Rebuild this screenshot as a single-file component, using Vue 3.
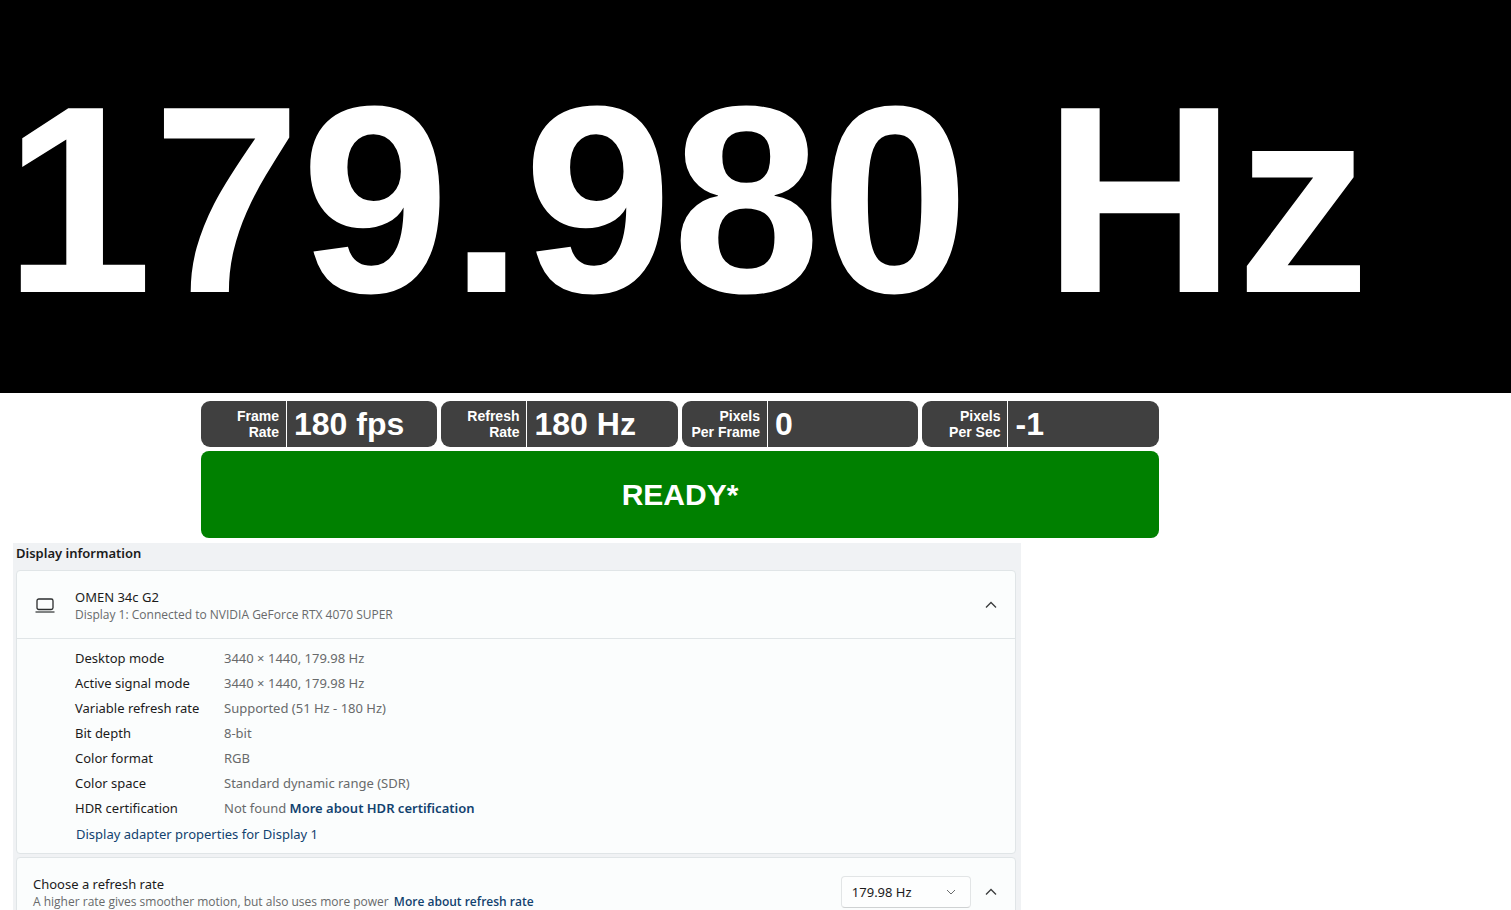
<script setup>
import { ref } from 'vue'

const stats = [
  { label: ['Frame', 'Rate'], value: '180 fps' },
  { label: ['Refresh', 'Rate'], value: '180 Hz' },
  { label: ['Pixels', 'Per Frame'], value: '0' },
  { label: ['Pixels', 'Per Sec'], value: '-1' },
]

const details = [
  { name: 'Desktop mode', value: '3440 × 1440, 179.98 Hz' },
  { name: 'Active signal mode', value: '3440 × 1440, 179.98 Hz' },
  { name: 'Variable refresh rate', value: 'Supported (51 Hz - 180 Hz)' },
  { name: 'Bit depth', value: '8-bit' },
  { name: 'Color format', value: 'RGB' },
  { name: 'Color space', value: 'Standard dynamic range (SDR)' },
  { name: 'HDR certification', value: 'Not found', link: 'More about HDR certification' },
]

const rate = ref('179.98 Hz')
</script>

<template>
  <main class="page">
    <h1 class="readout">179.980 Hz</h1>

    <section class="monitor">
      <div class="stats">
        <div v-for="s in stats" :key="s.label.join(' ')" class="stat">
          <div class="stat-label">{{ s.label[0] }}<br />{{ s.label[1] }}</div>
          <div class="stat-value">{{ s.value }}</div>
        </div>
      </div>
      <div class="ready">READY*</div>
    </section>

    <section class="settings">
      <h2 class="heading">Display information</h2>

      <div class="card">
        <div class="card-head">
          <svg class="laptop" viewBox="0 0 20 16" aria-hidden="true">
            <rect x="2" y="2" width="16" height="10.5" rx="1.8" fill="none" stroke="#2b2d2e" stroke-width="1.3" />
            <path d="M0.5 15H19.5" stroke="#4a4c4d" stroke-width="1.4" />
          </svg>
          <div class="titles">
            <div class="title">OMEN 34c G2</div>
            <div class="subtitle">Display 1: Connected to NVIDIA GeForce RTX 4070 SUPER</div>
          </div>
          <button class="toggle" type="button" aria-label="Collapse display details">
            <svg viewBox="0 0 12 8" aria-hidden="true"><path d="M1 6.5L6 1.5L11 6.5" /></svg>
          </button>
        </div>
        <div class="card-body">
          <table class="details">
            <tbody>
              <tr v-for="d in details" :key="d.name">
                <th scope="row">{{ d.name }}</th>
                <td>{{ d.value }} <a v-if="d.link" class="strong-link" href="#">{{ d.link }}</a></td>
              </tr>
            </tbody>
          </table>
          <a class="adapter-link" href="#">Display adapter properties for Display 1</a>
        </div>
      </div>

      <div class="card rate-card">
        <div class="titles">
          <label class="title" for="rate">Choose a refresh rate</label>
          <div class="subtitle">
            A higher rate gives smoother motion, but also uses more power
            <a class="strong-link more" href="#">More about refresh rate</a>
          </div>
        </div>
        <div class="select">
          <select id="rate" v-model="rate">
            <option>179.98 Hz</option>
          </select>
          <svg class="arrow" viewBox="0 0 10 6" aria-hidden="true"><path d="M1 1L5 5L9 1" /></svg>
        </div>
        <button class="toggle" type="button" aria-label="Collapse refresh rate options">
          <svg viewBox="0 0 12 8" aria-hidden="true"><path d="M1 6.5L6 1.5L11 6.5" /></svg>
        </button>
      </div>
    </section>
  </main>
</template>

<style>
body {
  margin: 0;
  background: #fff;
}
</style>

<style scoped>
.page {
  height: 100vh;
  overflow: hidden;
  font-family: "Liberation Sans", Arial, sans-serif;
}

.readout {
  margin: 0;
  padding: 6px 0 0 4px;
  background: #000;
  color: #fff;
  font-size: 267px;
  line-height: 387px;
  font-weight: 700;
  white-space: nowrap;
}

.monitor {
  width: 63.4%;
  margin: 8px 0 0 201px;
  color: #fff;
  font-weight: 700;
}

.stats {
  display: grid;
  grid-template-columns: repeat(4, 1fr);
  gap: 4px;
}

.stat {
  display: flex;
  height: 46px;
  border-radius: 9px;
  background: #404040;
}

.stat-label {
  box-sizing: border-box;
  width: 86px;
  padding: 7px 7px 0 0;
  border-right: 1px solid #fff;
  font-size: 14px;
  line-height: 16px;
  text-align: right;
  white-space: nowrap;
}

.stat-value {
  padding-left: 7px;
  font-size: 32px;
  line-height: 46px;
}

.ready {
  margin-top: 4px;
  border-radius: 8px;
  background: #008000;
  font-size: 30px;
  line-height: 87px;
  text-align: center;
}

.settings {
  box-sizing: border-box;
  width: 66.7%;
  margin: 5px 0 0 13px;
  padding: 0 5px 16px 3px;
  background: #f0f2f4;
  color: #1b1b1b;
  font-family: "Noto Sans", "Open Sans", sans-serif;
  font-size: 13px;
}

.heading {
  margin: 0;
  font-size: 13px;
  line-height: 20px;
  font-weight: 600;
  padding-bottom: 7px;
}

.card {
  border: 1px solid #e0e5e7;
  border-radius: 4px;
  background: #fbfdfd;
}

.card-head {
  display: flex;
  align-items: center;
  height: 67px;
  padding: 0 18px;
  border-bottom: 1px solid #e0e5e7;
}

.laptop {
  width: 20px;
  height: 16px;
  margin-right: 20px;
}

.titles {
  flex: 1;
  padding-top: 2px;
}

.title {
  display: block;
  line-height: 18px;
}

.subtitle {
  color: #686a6b;
  font-family: "Open Sans", "Noto Sans", sans-serif;
  font-size: 12px;
  line-height: 18px;
}

.toggle {
  display: flex;
  padding: 0;
  border: 0;
  background: none;
}

.toggle svg {
  width: 12px;
  height: 8px;
  fill: none;
  stroke: #3a3c3d;
  stroke-width: 1.3;
}

.card-body {
  padding: 7px 0 6px 58px;
}

.details {
  border-collapse: collapse;
  line-height: 25px;
}

.details th {
  width: 149px;
  padding: 0;
  font-weight: 400;
  text-align: left;
  white-space: nowrap;
}

.details td {
  padding: 0;
  color: #686a6b;
}

a {
  color: #12426f;
  text-decoration: none;
}

.strong-link {
  font-weight: 600;
}

.adapter-link {
  display: block;
  padding: 1px 0 0 1px;
  line-height: 25px;
}

.rate-card {
  display: flex;
  align-items: center;
  height: 68px;
  margin-top: 3px;
  padding: 0 18px 0 16px;
}

.more {
  margin-left: 2px;
}

.select {
  position: relative;
  margin-right: 14px;
}

.select select {
  width: 130px;
  height: 32px;
  padding: 0 10px;
  border: 1px solid #e2e5e6;
  border-bottom-color: #cfd2d3;
  border-radius: 4px;
  background: #fdfefe;
  color: #1b1b1b;
  font: inherit;
  appearance: none;
}

.arrow {
  position: absolute;
  top: 13px;
  right: 15px;
  width: 10px;
  height: 6px;
  fill: none;
  stroke: #6a6c6d;
  pointer-events: none;
}
</style>
